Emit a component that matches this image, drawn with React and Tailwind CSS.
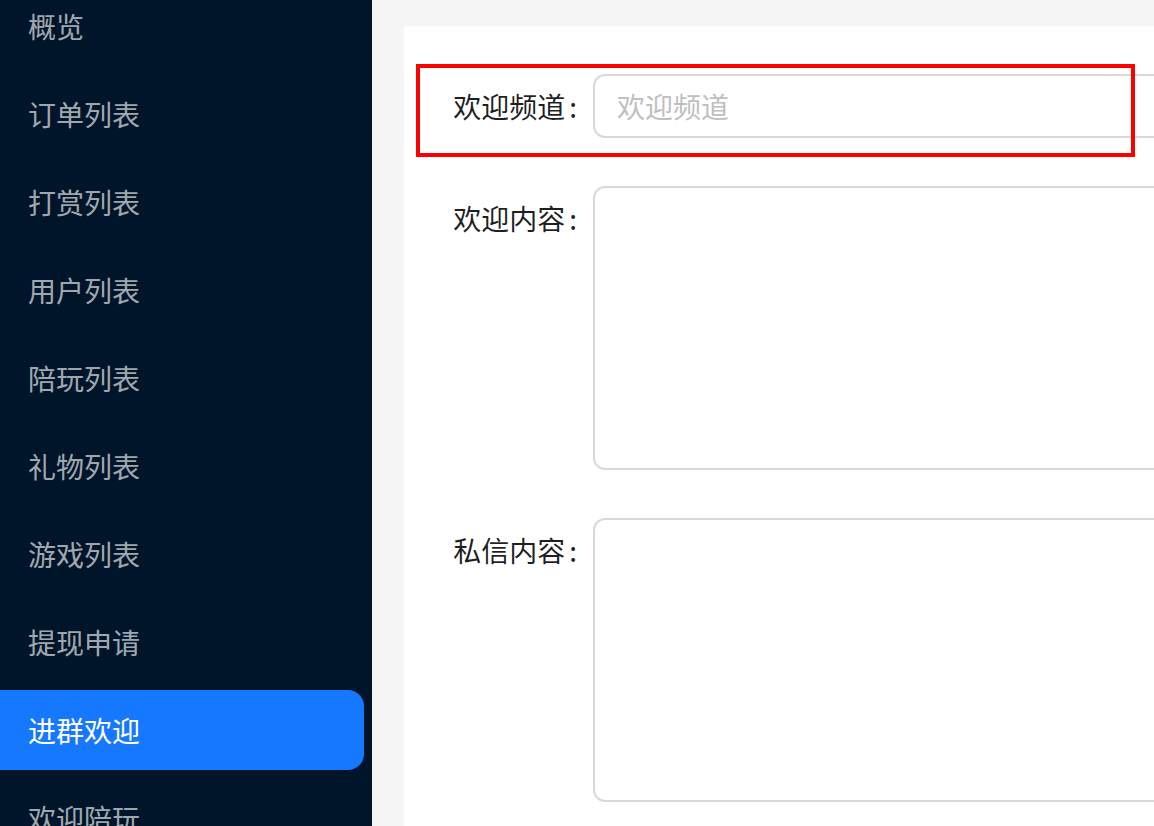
import React from 'react';

const menuItems = ['概览', '订单列表', '打赏列表', '用户列表', '陪玩列表', '礼物列表', '游戏列表', '提现申请', '进群欢迎', '欢迎陪玩'];

const FormRow = ({ label, children, highlight }) => (
  <div className="relative flex">
    <div className="w-[189px] shrink-0 flex justify-end h-16 items-center pr-4 text-[28px] text-[rgba(0,0,0,0.88)]">
      {label}
      <span className="ml-1">:</span>
    </div>
    {children}
    {highlight && (
      <div className="absolute left-3 top-[-10px] w-[719px] h-[93px] border-4 border-[#ff0000] pointer-events-none" />
    )}
  </div>
);

export default function App() {
  return (
    <div
      className="flex h-[826px] w-[1154px] overflow-hidden"
      style={{ fontFamily: '"Noto Sans CJK SC", "Noto Sans", sans-serif' }}
    >
      {/* Sidebar */}
      <aside className="w-[372px] shrink-0 bg-[#001529]">
        <ul className="flex flex-col gap-2 -mt-[14px]">
          {menuItems.map((item) => {
            const active = item === '进群欢迎';
            return (
              <li
                key={item}
                className={`h-20 mr-2 flex items-center pl-[28px] text-[28px] rounded-r-2xl ${
                  active ? 'bg-[#1677ff] text-white' : 'text-[rgba(255,255,255,0.65)]'
                }`}
              >
                {item}
              </li>
            );
          })}
        </ul>
      </aside>

      {/* Main */}
      <main className="flex-1 bg-[#f5f5f5] pl-8 pt-[26px] overflow-hidden">
        <div className="bg-white w-[1000px] h-[900px] pt-12 flex flex-col gap-12">
          <FormRow label="欢迎频道" highlight>
            <input
              className="flex-1 h-16 rounded-xl border-2 border-[#d9d9d9] px-[22px] text-[28px] outline-none placeholder:text-[#bfbfbf]"
              placeholder="欢迎频道"
            />
          </FormRow>
          <FormRow label="欢迎内容">
            <textarea className="flex-1 h-[284px] rounded-xl border-2 border-[#d9d9d9] resize-none outline-none" />
          </FormRow>
          <FormRow label="私信内容">
            <textarea className="flex-1 h-[284px] rounded-xl border-2 border-[#d9d9d9] resize-none outline-none" />
          </FormRow>
        </div>
      </main>
    </div>
  );
}
